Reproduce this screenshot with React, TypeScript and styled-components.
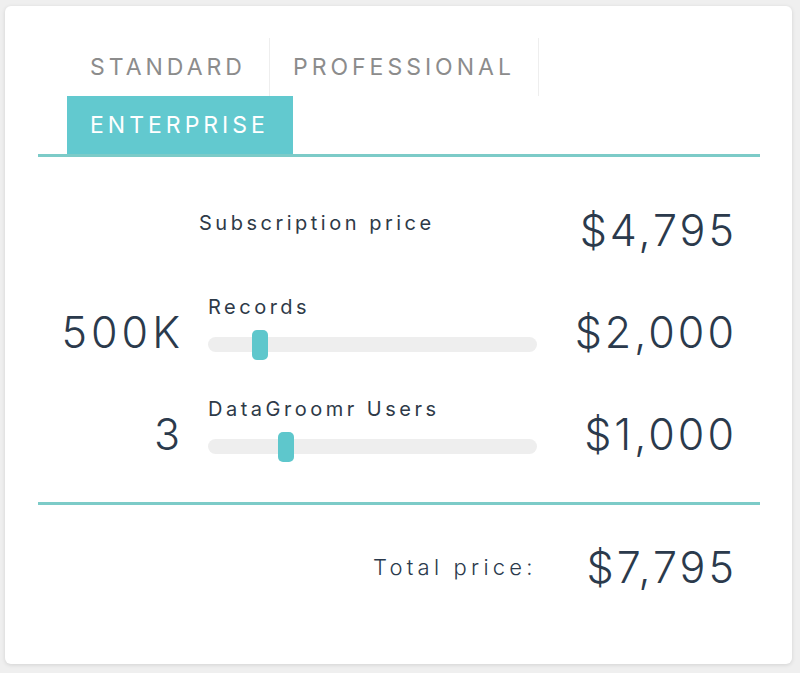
import * as React from 'react'
import styled, { createGlobalStyle } from 'styled-components'

const Global = createGlobalStyle`
  * {
    box-sizing: border-box;
  }

  html,
  body {
    margin: 0;
    padding: 0;
    background: #efefef;
  }

  body {
    font-family: 'Inter', 'Liberation Sans', sans-serif;
    color: #2b3a4c;
  }
`

const Page = styled.div`
  width: 800px;
  height: 673px;
  padding: 6px 8px 9px 5px;
`

const Card = styled.div`
  width: 100%;
  height: 100%;
  background: #fff;
  border-radius: 6px;
  box-shadow: 0 1px 4px rgba(0, 0, 0, 0.12);
  padding: 32px 32px 0 33px;
  display: flex;
  flex-direction: column;
`

const TabList = styled.div`
  display: flex;
  flex-wrap: wrap;
  padding-left: 29px;
  border-bottom: 3px solid #7ccbc8;
`

const Tab = styled.div<{ $active?: boolean }>`
  height: 58px;
  display: flex;
  align-items: center;
  padding: 0 23px 0 23px;
  font-size: 23px;
  font-weight: 400;
  letter-spacing: 4px;
  color: ${(p) => (p.$active ? '#fff' : '#8c8c8c')};
  background: ${(p) => (p.$active ? '#62c9cf' : 'transparent')};
  border-right: 1px solid ${(p) => (p.$active ? 'transparent' : '#eeeeee')};
`

const Rows = styled.div`
  padding: 22px 26px 17px 0;
  border-bottom: 3px solid #7ccbc8;
`

const Row = styled.div`
  height: 102px;
  display: grid;
  grid-template-columns: 142px 329px 1fr;
  column-gap: 28px;
  align-items: center;
`

const Quantity = styled.div`
  text-align: right;
  font-size: 43px;
  font-weight: 300;
  letter-spacing: 4px;
  margin-right: -4px;
`

const Control = styled.div<{ $shift?: number; $lift: number }>`
  display: flex;
  flex-direction: column;
  gap: 12px;
  margin-left: ${(p) => p.$shift ?? 0}px;
  margin-bottom: ${(p) => p.$lift}px;
`

const Label = styled.div`
  font-size: 20px;
  line-height: 22px;
  letter-spacing: 3.5px;
  color: #2e3a48;
`

const Slider = styled.div`
  position: relative;
  height: 30px;
  display: flex;
  align-items: center;
`

const Track = styled.div`
  width: 100%;
  height: 15px;
  border-radius: 8px;
  background: #eeeeee;
`

const Thumb = styled.div`
  position: absolute;
  top: 0;
  width: 16px;
  height: 30px;
  border-radius: 5px;
  background: #5ec7cc;
`

const Price = styled.div`
  text-align: right;
  font-size: 43px;
  font-weight: 300;
  letter-spacing: 3px;
  margin-right: -3px;
`

const Total = styled.div`
  flex: 1;
  display: flex;
  justify-content: flex-end;
  align-items: flex-start;
  gap: 50px;
  padding: 36px 26px 0 0;
`

const TotalLabel = styled.div`
  font-size: 22px;
  font-weight: 300;
  letter-spacing: 4.2px;
  line-height: 52px;
`

type Item = {
  qty?: string
  label: string
  price: string
  thumb?: number
  shift?: number
}

const items: Item[] = [
  { label: 'Subscription price', price: '$4,795', shift: -9 },
  { qty: '500K', label: 'Records', price: '$2,000', thumb: 44 },
  { qty: '3', label: 'DataGroomr Users', price: '$1,000', thumb: 70 },
]

export default function App() {
  return (
    <>
      <Global />
      <Page>
        <Card>
          <TabList>
            <Tab>STANDARD</Tab>
            <Tab>PROFESSIONAL</Tab>
            <Tab $active>ENTERPRISE</Tab>
          </TabList>
          <Rows>
            {items.map((it) => (
              <Row key={it.label}>
                <Quantity>{it.qty}</Quantity>
                <Control $shift={it.shift} $lift={it.thumb === undefined ? 14 : 9}>
                  <Label>{it.label}</Label>
                  {it.thumb !== undefined && (
                    <Slider>
                      <Track />
                      <Thumb style={{ left: it.thumb }} />
                    </Slider>
                  )}
                </Control>
                <Price>{it.price}</Price>
              </Row>
            ))}
          </Rows>
          <Total>
            <TotalLabel>Total price:</TotalLabel>
            <Price>$7,795</Price>
          </Total>
        </Card>
      </Page>
    </>
  )
}
